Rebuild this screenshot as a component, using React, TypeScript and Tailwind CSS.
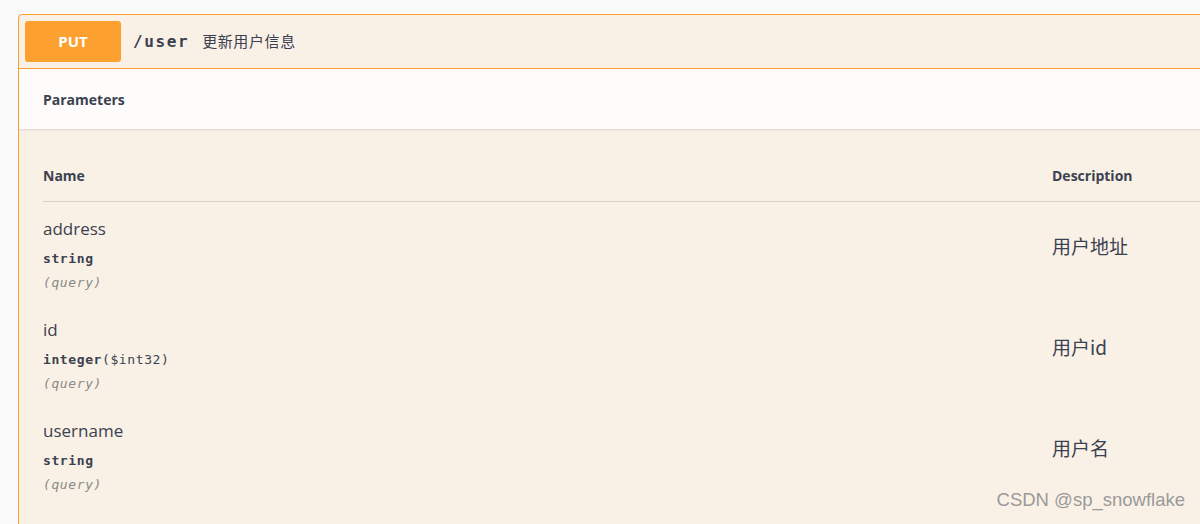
const params = [
  { name: 'address', type: 'string', fmt: '', desc: '用户地址' },
  { name: 'id', type: 'integer', fmt: '($int32)', desc: '用户id' },
  { name: 'username', type: 'string', fmt: '', desc: '用户名' },
];

const sans = "font-['Open_Sans','Noto_Sans','Noto_Sans_CJK_SC',sans-serif]";
const mono = "font-['DejaVu_Sans_Mono','Liberation_Mono',monospace]";

export default function App() {
  return (
    <div className={`w-[1200px] h-[524px] overflow-hidden bg-[#fafafa] pt-[14px] pl-[18px] relative text-[#3b4151] ${sans}`}>
      <div className="w-[1200px] h-[520px] border border-[#fca130] rounded-tl-[4px] bg-[#f9f1e5]">
        {/* Summary */}
        <div className="h-[54px] flex items-center px-[6px] border-b border-[#fca130]">
          <div className="w-[96px] h-[41px] rounded-[3px] bg-[#fca130] text-white font-bold text-[15px] flex items-center justify-center">
            PUT
          </div>
          <span className={`ml-[12px] text-[16px] font-semibold tracking-[1.6px] ${mono}`}>/user</span>
          <span className="ml-[13px] text-[15px] tracking-[0.6px] font-['Noto_Sans_CJK_SC',sans-serif]">更新用户信息</span>
        </div>

        {/* Parameters header */}
        <div className="h-[60px] flex items-center px-[24px] bg-[#fefcfa] shadow-[0_1px_2px_rgba(0,0,0,0.1)]">
          <h4 className="text-[14px] font-bold">Parameters</h4>
        </div>

        {/* Table */}
        <div className="pl-[24px]">
          <div className="h-[73px] flex items-end pb-[15px] border-b border-[#d9d2c9] text-[14px] font-bold">
            <div className="w-[1009px]">Name</div>
            <div>Description</div>
          </div>
          {params.map(p => (
            <div key={p.name} className="h-[101px] flex">
              <div className="w-[1009px] pt-[17px]">
                <div className="text-[17px] leading-[20px]">{p.name}</div>
                <div className={`mt-[12px] text-[13px] leading-[16px] font-semibold tracking-[0.6px] ${mono}`}>
                  {p.type}
                  {p.fmt && <span className="font-normal">{p.fmt}</span>}
                </div>
                <div className={`mt-[8px] text-[13px] leading-[16px] italic tracking-[0.6px] text-[#8a8a8a] ${mono}`}>(query)</div>
              </div>
              <div className="pt-[33px] text-[19px] leading-[22px] font-['Noto_Sans_CJK_SC',sans-serif]">{p.desc}</div>
            </div>
          ))}
        </div>
      </div>

      <div className="absolute right-[15px] bottom-[10px] text-[18.5px] text-[#9a9a9a] font-['Liberation_Sans',sans-serif]">
        CSDN @sp_snowflake
      </div>
    </div>
  );
}
